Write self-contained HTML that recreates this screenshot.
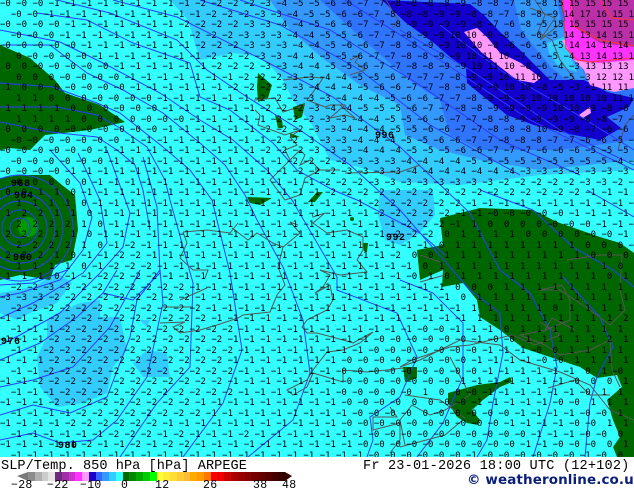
<!DOCTYPE html>
<html><head><meta charset="utf-8"><style>
html,body{margin:0;padding:0;background:#fff}
#p{position:relative;width:634px;height:490px;overflow:hidden;background:#fff}
#m{position:absolute;left:0;top:0;width:634px;height:457px;overflow:hidden;background:#33ffff}
#m svg{position:absolute;left:0;top:0}
pre{position:absolute;left:0;top:-1px;margin:0;font:normal 9px/10.5px "DejaVu Sans Mono","Liberation Mono",monospace;color:#000;white-space:pre}
.l{position:absolute;font:bold 10px "Liberation Mono",monospace;color:#000;letter-spacing:.5px}
.t{position:absolute;font:13.6px/16px "Liberation Mono",monospace;color:#000;white-space:pre}
.n{position:absolute;top:480px;font:11.5px/12px "Liberation Mono",monospace;color:#000;letter-spacing:.3px}
#lg{position:absolute;left:28px;top:472px;height:9px;display:flex;width:257px}
#lg i{flex:1;display:block}
</style></head><body><div id="p"><div id="m">
<svg width="634" height="457" viewBox="0 0 634 457">
<g fill="#33ccff">
<polygon points="47,320 57,313 80,303 100,300 100,317 120,317 127,350 113,367 107,393 83,403 57,407 40,387 37,357 47,337"/>
<polygon points="0,293 33,287 57,273 72,283 57,303 30,313 17,320 0,313"/>
<polygon points="133,363 147,350 167,353 170,377 143,377"/>
<polygon points="140,320 150,320 147,327"/>
<polygon points="170,0 188,20 200,60 233,53 262,57 283,80 293,100 312,125 330,160 370,170 400,182 460,185 540,175 634,170 634,0"/>
<polygon points="380,190 433,190 435,215 420,233 400,245 385,240 378,215"/>
</g>
<polygon fill="#3399ff" points="270,0 290,30 325,60 360,85 400,105 405,135 440,150 480,160 540,170 634,160 634,0"/>
<polygon fill="#2f74ff" points="320,0 360,37 413,83 440,100 450,135 480,150 520,150 560,150 634,140 634,0"/>
<polygon fill="#3399ff" points="514,0 557,0 561,20 567,43 577,60 587,78 581,80 564,78 551,67 537,50 521,30"/>
<polygon fill="#33ccff" points="547,43 564,37 571,57 577,72 557,65 549,53"/>
<polygon fill="#1400cc" points="382,0 470,4 484,15 500,32 520,50 540,70 550,80 584,80 607,92 634,98 629,107 607,117 621,128 600,140 574,135 534,125 507,115 484,97 467,83 466,68 450,57 434,43 405,22"/>
<polygon fill="#ff99ff" points="464,32 477,28 487,37 500,53 521,63 541,78 534,83 517,80 500,67 481,52"/>
<polygon fill="#ff99ff" points="579,115 590,107 591,113 583,118"/>
<polygon fill="#ff99ff" points="562,40 574,60 584,70 590,85 614,92 634,88 634,50"/>
<polygon fill="#ff33ff" points="562,0 634,0 634,60 600,63 574,60 566,45"/>
<polygon fill="#bb2fa8" points="571,0 634,0 634,47 600,43 574,27"/>
<g fill="#006600">
<polygon points="0,45 30,58 55,80 65,93 100,105 125,122 90,130 45,135 30,150 10,148 0,150"/>
<polygon points="0,178 20,175 50,175 62,185 75,195 78,230 72,260 55,265 50,280 20,275 0,280"/>
<polygon points="440,218 480,208 533,210 557,222 600,237 620,243 634,253 634,457 617,457 613,447 620,437 613,420 607,400 622,387 617,375 597,378 580,367 550,357 523,348 500,330 480,317 477,300 463,283 442,287 443,270 420,280 417,250 443,245"/>
<polygon points="448,393 477,385 500,382 510,377 512,382 500,387 483,400 472,410 480,420 478,425 467,423 457,417 448,403"/>
<polygon points="403,367 417,367 417,378 405,382"/>
<polygon points="258,73 272,85 268,98 258,102 257,87"/>
<polygon points="293,107 305,103 302,117 295,120"/>
<polygon points="275,115 282,120 283,128 278,128"/>
<polygon points="290,133 300,137 290,138"/>
<polygon points="247,197 272,198 260,205 250,203"/>
<polygon points="317,192 323,192 315,202 308,202"/>
<polygon points="363,243 368,243 367,252 364,251"/>
<circle cx="352" cy="219" r="2"/>
</g>
<circle cx="28" cy="227" r="10" fill="#009900"/>
<g fill="none" stroke="#2a3cff" stroke-width="1">
<circle cx="20" cy="228" r="10"/><circle cx="20" cy="228" r="18"/><circle cx="20" cy="228" r="27"/><circle cx="20" cy="228" r="35"/><circle cx="20" cy="228" r="43"/><circle cx="20" cy="228" r="53"/>
<path d="M0,122L50,132 97,137 117,150 135,165 143,190 150,230"/>
<path d="M0,107L57,107 97,115 120,128 147,147 165,180 170,200 193,283 190,367 157,403 120,457"/>
<path d="M0,83L53,87 97,103 120,113 163,147 190,170 212,200 230,273 242,350 223,403 183,457"/>
<path d="M3,45L50,45 87,73 123,90 163,113 200,143 225,165 245,195 257,220 283,267 303,320 310,373 293,420 248,457"/>
<path d="M0,30L60,42 103,63 160,93 200,120 233,140 267,170 292,200 337,277 337,290 397,313 417,357 400,397 370,417 373,440 367,457"/>
<path d="M37,13L87,20 133,43 190,63 200,97 230,110 273,143 297,170 333,190 357,200 420,233 445,255"/>
<path d="M57,0L110,13 177,40 207,70 247,97 300,130 350,165 400,210 470,290 500,313 503,353 493,403 487,440 477,457"/>
<path d="M113,0L177,17 263,60 333,97 367,123 400,147 470,213 500,270 530,293 550,330 557,367 550,403 533,457"/>
<path d="M400,280L433,293 463,323 463,377 443,423 417,457"/>
<path d="M480,190L533,210 573,247 613,270 634,287"/>
<path d="M563,277L600,317 613,347 597,377 590,403 585,457"/>
<path d="M587,190L634,217"/>
<path d="M50,150L80,183 92,217 83,250 60,280 20,293 0,297"/>
<path d="M78,153L100,200 107,243 83,273 33,303 0,318"/>
<path d="M107,150L130,213 123,247 100,273 60,313 20,335 0,345"/>
<path d="M143,157L157,207 160,273 133,300 103,293"/>
<path d="M0,360L40,343 77,317 103,293 117,270"/>
<path d="M0,387L33,380 73,367 110,327 130,290 140,270"/>
<path d="M0,415L33,405 70,413 107,397 130,337 137,300 160,270"/>
<path d="M0,440L33,433 60,443 93,440 117,420 147,377 163,303 160,270"/>
<path d="M0,285L33,283 67,270"/>
<path d="M200,0L280,25 360,70 430,125 520,175"/>
<path d="M240,0L330,30 420,85 500,140 580,175"/>
<path d="M345,0L440,60 530,120 634,170"/>
<path d="M400,30L470,70 560,130 634,165"/>
<path d="M440,25L500,70 570,110 634,150"/>
</g>
<g fill="none" stroke="#ff3333" stroke-width="1">
<path d="M563,0L566,48 577,60 590,62 634,58"/>
<path d="M570,0L572,25 600,40 634,46"/>
<path d="M600,0L612,18 634,20"/>
</g>
<g fill="none" stroke="#555" stroke-width="1">
<path d="M530,8L555,18 540,40 565,20 560,0M535,0L545,15 538,32 552,40 560,60 575,80M618,150L625,125 634,115M386,0L398,20 393,28"/>
<path d="M350,60L360,55 355,62 365,70 350,75M283,80L310,77 323,78 317,87 307,100 325,107 330,105 345,105 330,118 345,115 355,118 340,105"/>
<path d="M254,100L275,98 283,112 305,105M255,110L260,115 258,125 285,135 300,130 290,137 297,145 285,150 290,160 300,150 305,155 300,165 310,160 320,170 305,178 300,195 285,200 270,180 280,170 290,160"/>
<path d="M345,173L400,172 420,165M315,170L340,170"/>
<path d="M183,232L207,230 230,233 238,223M232,228L248,240 257,233 273,243 283,247 300,233 290,222 298,225"/>
<path d="M283,247L278,267 285,285 277,295 270,312 243,315 238,318 217,325 200,330 180,333"/>
<path d="M183,232L187,243 180,258 193,270 208,270 205,278M180,300L207,288M163,307L193,307M160,323L185,322 173,327 180,333"/>
<path d="M320,270L330,275 323,287 315,293 330,285 333,300 327,310 307,320 302,327 307,333 317,333 343,340 353,343 373,332 360,343 343,350 327,352 313,370 307,380 287,390 293,395 307,387 313,373 343,382 343,370 367,372 387,370 403,368"/>
<path d="M320,270L340,275 367,272 357,260 363,250 363,237 347,230 327,233 313,223 325,213 313,217 312,213"/>
<path d="M390,407L397,417 373,417 373,430 400,423 400,440 390,453"/>
<path d="M420,255L440,262 445,275 420,282M567,260L600,255 622,255 620,290 625,310 610,325 590,310 560,290 540,290 562,285 570,300 570,320 545,330 552,318 575,330M540,322L560,335 535,345 512,335 470,345 450,347 412,360 400,367"/>
<path d="M547,330L520,335 545,345 560,355 590,350 610,340 612,370 620,387"/>
<path d="M400,367L420,360 460,340 500,345 520,360 560,372 590,385 610,410 634,420M548,388L575,380 590,395 610,395"/>
<path d="M450,357L470,395 445,410 430,415 412,405 400,420 405,445"/>
<path d="M405,395L440,400 465,418 445,435 400,447"/>
</g>
</svg>
<pre>−0 −0 −0 −1 −1 −1 −1 −1 −1 −1 −1 −1 −2 −2 −2 −2 −3 −4 −5 −5 −6 −6 −7 −7 −8 −8 −8 −8 −9 −8 −8 −7 −8 −8 15 15 15 15 15
  −0 −0 −1 −1 −1 −1 −1 −1 −1 −1 −1 −1 −2 −2 −2 −3 −3 −4 −5 −5 −6 −6 −7 −8 −8 −8 −9 −9 −8 −8 −7 −8 −8 −9 14 17 16 15 15
−0 −0 −0 −0 −1 −1 −1 −1 −1 −1 −1 −2 −2 −2 −2 −3 −3 −4 −4 −5 −6 −6 −7 −7 −8 −9 −9 −9 −9 −8 −7 −6 −8 −5 15 15 15 15 15
  −0 −0 −0 −1 −1 −1 −1 −1 −1 −1 −1 −2 −2 −2 −3 −3 −3 −4 −4 −5 −5 −6 −7 −7 −8 −9 −9 10 10 −9 −8 −6 −6 −5 14 13 14 15 14
−0 −0 −0 −0 −0 −1 −1 −1 −1 −1 −1 −1 −2 −2 −2 −3 −3 −3 −4 −4 −5 −6 −6 −7 −8 −8 −9 −9 10 10 −8 −6 −6 −5 −5 14 14 14 14
   0 −0 −0 −0 −0 −1 −1 −1 −1 −1 −1 −1 −2 −2 −2 −3 −3 −4 −4 −5 −5 −6 −7 −7 −8 −8 −9 −9 18 11 10 −7 −6 −5 −4 13 14 13 13
 0  0 −0 −0 −0 −0 −0 −1 −1 −1 −1 −1 −1 −2 −2 −2 −3 −3 −4 −4 −5 −5 −6 −7 −7 −8 −8 −9 −9 10 11 10 −8 −6 −4 −3 13 13 13
   0  0  0 −0 −0 −0 −0 −1 −1 −1 −1 −1 −1 −1 −2 −2 −2 −3 −3 −4 −4 −5 −5 −6 −7 −7 −7 −8 −9 −9 10 11 10 −7 −5 −3 12 12 12
 1  0  0  0 −0 −0 −0 −0 −1 −1 −1 −1 −1 −1 −2 −2 −2 −3 −3 −4 −4 −4 −5 −6 −6 −7 −7 −8 −8 −9 −9 10 10 −8 −5 −3 −1 11 11
   1  1  0  0  0 −0 −0 −0 −0 −1 −1 −1 −1 −1 −1 −2 −2 −2 −3 −3 −4 −4 −4 −5 −6 −6 −7 −7 −8 −9 −9 −9 10 10 10 10 10 11 10
 1  1  1  1  0  0  0 −0 −0 −0 −1 −1 −1 −1 −1 −1 −2 −2 −2 −3 −4 −4 −5 −5 −5 −6 −7 −7 −8 −8 −9 −9 −9 −9 10 10 −9 −8 −8
   1  1  1  1  0  0  0  0 −0 −0 −0 −1 −1 −1 −1 −1 −2 −2 −2 −3 −3 −4 −4 −5 −5 −6 −6 −7 −7 −8 −8 −9 −9 −9 −9 −8 −8 −7 −7
 0  0  0  0 −0 −0 −0 −0 −0 −0 −1 −1 −1 −1 −1 −1 −2 −2 −2 −3 −3 −4 −4 −4 −5 −5 −6 −6 −7 −7 −8 −8 −8 10 −9 −8 −7 −6 −6
  −0 −0 −0 −0 −0 −0 −0 −1 −1 −1 −1 −1 −1 −1 −1 −1 −2 −2 −3 −3 −3 −4 −4 −4 −5 −5 −6 −6 −7 −7 −8 −8 −8 −7 −7 −6 −6 −5 −5
−0 −0 −0 −0 −0 −0 −1 −1 −1 −1 −1 −1 −1 −1 −1 −1 −2 −2 −2 −3 −3 −3 −4 −4 −4 −5 −5 −5 −6 −6 −7 −7 −7 −6 −6 −6 −5 −5 −5
  −0 −0 −0 −0 −0 −0 −1 −1 −1 −1 −1 −1 −1 −1 −1 −1 −1 −2 −2 −2 −2 −3 −3 −3 −4 −4 −4 −4 −5 −5 −5 −5 −5 −5 −5 −5 −5 −4 −4
−0 −0 −0 −0 −1 −1 −1 −1 −1 −1 −1 −1 −1 −1 −1 −1 −1 −1 −2 −2 −2 −3 −3 −3 −3 −4 −4 −4 −4 −4 −4 −4 −3 −3 −3 −3 −3 −3 −3
  −0  0  0  0  0 −1 −1 −1 −1 −1 −1 −1 −1 −1 −1 −1 −1 −1 −1 −2 −2 −2 −3 −3 −3 −3 −3 −3 −3 −3 −2 −2 −2 −2 −2 −3 −3 −2 −2
 0  0  1  1  0 −1 −1 −1 −1 −1 −1 −1 −1 −1 −1 −1 −1 −1 −1 −1 −2 −2 −2 −2 −2 −2 −2 −2 −2 −2 −2 −2 −2 −2 −2 −2 −1 −1 −1
   1  1  1  1  0 −1 −1 −1 −1 −1 −1 −1 −1 −1 −1 −1 −1 −1 −1 −1 −1 −1 −2 −2 −2 −2 −2 −2 −1 −1 −1 −1 −1 −1 −1 −1 −1 −1 −1
 1  2  2  1  1  0 −1 −1 −1 −1 −1 −1 −1 −1 −1 −1 −1 −1 −1 −1 −1 −1 −1 −2 −2 −2 −2 −2 −1 −1 −0 −0 −0 −0 −0 −1 −1 −1 −1
   2  2  2  2  1  0 −1 −1 −1 −1 −1 −1 −1 −1 −1 −1 −1 −1 −1 −1 −1 −1 −1 −1 −2 −2 −2 −1  1  0  0  0  0 −0 −0 −0 −1 −1 −1
 2  2  2  1  1  0 −1 −1 −1 −1 −1 −1 −1 −1 −1 −1 −1 −1 −1 −1 −1 −1 −1 −1 −2 −2 −2  0  1  1  1  1  0  0  0  0 −0 −0 −1
   2  2  2  2  1  0 −1 −2 −1 −1 −1 −1 −1 −1 −1 −1 −1 −1 −1 −1 −1 −1 −1 −1 −1 −1  0  1  1  1  1  1  1  1  1  0  0  0 −0
 2  2  2  1  0 −1 −1 −2 −2 −1 −1 −1 −1 −1 −1 −1 −1 −1 −1 −1 −1 −1 −1 −1 −2  0  0  1  1  1  1  1  1  1  1  1  0  0  0
   1  1  1  1  0 −1 −2 −2 −2 −1 −1 −1 −1 −1 −1 −1 −1 −1 −1 −1 −1 −1 −1 −1 −1  0  1  1  1  1  1  1  1  1  1  1  1  0  0
 1  1  1  0 −1 −1 −2 −2 −2 −2 −1 −1 −1 −1 −1 −1 −1 −1 −1 −1 −1 −1 −1 −1 −1 −0  1  0  1  1  1  1  1  1  1  1  1  0  1
  −2 −2 −3 −3 −2 −2 −2 −2 −2 −2 −2 −1 −1 −1 −1 −1 −1 −1 −1 −1 −1 −1 −1 −1 −1 −1 −1  0  0  0  1  1  1  1  1  1  1  1  1
−3 −3 −3 −2 −2 −2 −2 −2 −2 −2 −2 −2 −1 −1 −1 −1 −1 −1 −1 −1 −1 −1 −1 −1 −1 −1 −1 −1  0  1  1  1  1  1  1  1  1  1  1
  −2 −2 −2 −2 −2 −2 −2 −2 −2 −2 −2 −2 −1 −1 −1 −1 −1 −1 −1 −1 −1 −1 −1 −1 −1 −1 −1 −1  1  1  1  1  1  0  1  1  1  1  1
−1 −1 −1 −2 −2 −2 −2 −2 −2 −2 −2 −2 −2 −1 −1 −1 −1 −1 −1 −1 −1 −1 −1 −1 −1 −1 −1 −1 −1  1  1  1  1  1  1  1  1  1  2
  −1 −1 −1 −2 −2 −2 −2 −2 −2 −2 −2 −2 −2 −2 −1 −1 −1 −1 −1 −1 −1 −1 −1 −1 −1 −0 −0 −1 −1 −1  0  1  1  1  1  1  1  1  2
−1 −1 −1 −2 −2 −2 −2 −2 −2 −2 −2 −2 −2 −2 −1 −1 −1 −1 −1 −1 −1 −1 −1 −0 −0 −0 −0 −0 −0 −1 −0 −0  1  1  1  1  1  2  1
  −1 −1 −2 −2 −2 −2 −2 −2 −2 −2 −2 −2 −2 −2 −1 −1 −1 −1 −1 −1 −1 −1 −0 −0 −0 −0 −0 −0 −0 −1 −1 −1 −0  0  1  1  1  1  1
−1 −1 −1 −2 −2 −2 −2 −2 −2 −2 −2 −2 −2 −2 −1 −1 −1 −1 −1 −1 −1 −0 −0 −0 −0 −0 −0 −0 −0 −1 −1 −1 −1 −0 −0  1  1  1  1
  −1 −1 −2 −2 −2 −2 −2 −2 −2 −2 −2 −2 −2 −2 −1 −1 −1 −1 −1 −1 −0 −0 −0 −0 −0 −0 −0 −0 −0 −1 −1 −1 −1 −1 −1  0  1 −0  0
−1 −1 −2 −2 −2 −2 −2 −2 −2 −2 −2 −2 −2 −2 −1 −1 −1 −1 −1 −1 −1 −0 −0 −0 −0 −0 −0 −0 −1 −1 −1 −1 −1 −1 −1 −0  0  0  1
  −1 −1 −1 −2 −2 −2 −2 −2 −2 −2 −2 −2 −2 −2 −1 −1 −1 −1 −1 −1 −0 −0 −0 −0 −0  1  0  0 −0 −1 −1 −1 −1 −1 −1 −0  1  1  0
−1 −1 −1 −2 −2 −2 −2 −2 −2 −2 −2 −2 −1 −1 −1 −1 −1 −1 −1 −1 −1 −0 −0 −0 −0  0  0 −0 −0 −1 −1 −1 −1 −1 −0 −0  1  1  1
  −1 −1 −1 −1 −2 −2 −2 −2 −2 −2 −2 −2 −1 −1 −1 −1 −1 −1 −1 −1 −1 −0 −0 −0 −0  0 −0 −0 −0 −0 −0 −1 −1 −1 −1 −0 −0  1  1
−1 −1 −1 −1 −2 −2 −2 −2 −2 −2 −1 −1 −1 −1 −1 −1 −1 −1 −1 −1 −1 −0 −0 −0 −0 −0 −0 −0 −0 −0 −0 −1 −1 −1 −1 −0 −0  1  1
  −1 −1 −1 −1 −1 −1 −2 −2 −2 −1 −2 −1 −1 −1 −2 −1 −1 −1 −1 −1 −1 −1 −0 −0 −0 −0 −0 −0 −0 −0 −0 −0 −1 −1 −1 −0 −0  0  1
−1 −1 −1 −1 −1 −2 −1 −1 −2 −1 −2 −2 −1 −1 −1 −1 −1 −1 −1 −1 −1 −1 −0 −0 −0 −0 −0 −0 −0 −0 −0 −0 −1 −1 −0 −0 −0  0  1
  −1 −1 −1 −1 −1 −1 −1 −1 −1 −1 −1 −1 −1 −1 −1 −1 −1 −1 −1 −1 −1 −1 −0 −0 −0 −0 −0 −0 −1 −0 −0 −0 −0 −0 −0 −1 −0  0  0</pre>
<div class="l" style="left:11px;top:179px">968</div>
<div class="l" style="left:14px;top:191px">964</div>
<div class="l" style="left:13px;top:253px">960</div>
<div class="l" style="left:1px;top:337px">976</div>
<div class="l" style="left:58px;top:441px">980</div>
<div class="l" style="left:386px;top:233px">992</div>
<div class="l" style="left:375px;top:131px">996</div>
</div>
<div class="t" style="left:1px;top:459px;letter-spacing:.04px">SLP/Temp. 850 hPa [hPa] ARPEGE</div>
<div class="t" style="left:363px;top:459px;letter-spacing:.17px">Fr 23-01-2026 18:00 UTC (12+102)</div>
<div style="position:absolute;left:467px;top:472px;font:bold 13.5px/16px 'DejaVu Sans','Liberation Sans',sans-serif;color:#0a1f78;white-space:pre;letter-spacing:.1px">© weatheronline.co.uk</div>
<svg width="634" height="490" style="position:absolute;left:0;top:0"><polygon fill="#7a7a7a" points="17,476 28,472 28,481"/><polygon fill="#330000" points="285,472 292,476 285,481"/></svg>
<div id="lg"><i style="background:#8c8c8c"></i><i style="background:#b0b0b0"></i><i style="background:#cccccc"></i><i style="background:#e4e4e4"></i><i style="background:#6e2a7a"></i><i style="background:#a030a8"></i><i style="background:#cc33cc"></i><i style="background:#ff33ff"></i><i style="background:#ff99ff"></i><i style="background:#1a00c8"></i><i style="background:#3366ff"></i><i style="background:#3399ff"></i><i style="background:#33ccff"></i><i style="background:#33ffff"></i><i style="background:#006600"></i><i style="background:#008800"></i><i style="background:#00aa00"></i><i style="background:#00cc00"></i><i style="background:#00ff00"></i><i style="background:#ffff33"></i><i style="background:#ffee33"></i><i style="background:#ffdd33"></i><i style="background:#ffcc33"></i><i style="background:#ffbb33"></i><i style="background:#ffaa00"></i><i style="background:#ff9900"></i><i style="background:#ff7700"></i><i style="background:#ff0000"></i><i style="background:#ee0000"></i><i style="background:#cc0000"></i><i style="background:#aa0000"></i><i style="background:#990000"></i><i style="background:#880000"></i><i style="background:#770000"></i><i style="background:#660000"></i><i style="background:#550000"></i><i style="background:#440000"></i><i style="background:#330000"></i></div>
<div class="n" style="left:11px">−28</div>
<div class="n" style="left:47px">−22</div>
<div class="n" style="left:80px">−10</div>
<div class="n" style="left:121px">0</div>
<div class="n" style="left:155px">12</div>
<div class="n" style="left:203px">26</div>
<div class="n" style="left:253px">38</div>
<div class="n" style="left:282px">48</div>
</div></body></html>
